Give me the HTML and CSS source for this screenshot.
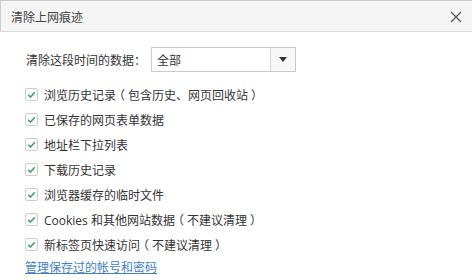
FILE: index.html
```html
<!DOCTYPE html>
<html lang="zh-CN">
<head>
<meta charset="utf-8">
<title>清除上网痕迹</title>
<link rel="stylesheet" href="styles.css">
</head>
<body>
<div class="dialog">
  <div class="header">
    <span class="title">清除上网痕迹</span>
    <span class="close" aria-label="关闭">
      <svg width="12" height="12" viewBox="0 0 12 12"><path d="M1 1 L11 11 M11 1 L1 11" stroke="#555" stroke-width="1.2" fill="none"/></svg>
    </span>
  </div>
  <div class="content">
    <div class="range">
      <span class="range-label">清除这段时间的数据：</span>
      <div class="select">
        <span class="select-value">全部</span>
        <span class="select-btn"><svg width="8" height="5" viewBox="0 0 8 5"><path d="M0 0 H8 L4 5 Z" fill="#333"/></svg></span>
      </div>
    </div>
    <ul class="options">
      <li class="option"><span class="check"><svg width="11" height="11" viewBox="0 0 11 11"><path d="M2.2 5.8 L4.5 8 L8.8 3.2" stroke="#44a866" stroke-width="1.7" fill="none"/></svg></span><span>浏览历史记录<span class="paren">（</span>包含历史、网页回收站<span class="paren">）</span></span></li>
      <li class="option"><span class="check"><svg width="11" height="11" viewBox="0 0 11 11"><path d="M2.2 5.8 L4.5 8 L8.8 3.2" stroke="#44a866" stroke-width="1.7" fill="none"/></svg></span><span>已保存的网页表单数据</span></li>
      <li class="option"><span class="check"><svg width="11" height="11" viewBox="0 0 11 11"><path d="M2.2 5.8 L4.5 8 L8.8 3.2" stroke="#44a866" stroke-width="1.7" fill="none"/></svg></span><span>地址栏下拉列表</span></li>
      <li class="option"><span class="check"><svg width="11" height="11" viewBox="0 0 11 11"><path d="M2.2 5.8 L4.5 8 L8.8 3.2" stroke="#44a866" stroke-width="1.7" fill="none"/></svg></span><span>下载历史记录</span></li>
      <li class="option"><span class="check"><svg width="11" height="11" viewBox="0 0 11 11"><path d="M2.2 5.8 L4.5 8 L8.8 3.2" stroke="#44a866" stroke-width="1.7" fill="none"/></svg></span><span>浏览器缓存的临时文件</span></li>
      <li class="option"><span class="check"><svg width="11" height="11" viewBox="0 0 11 11"><path d="M2.2 5.8 L4.5 8 L8.8 3.2" stroke="#44a866" stroke-width="1.7" fill="none"/></svg></span><span><span class="latin">Cookies </span>和其他网站数据<span class="paren">（</span>不建议清理<span class="paren">）</span></span></li>
      <li class="option"><span class="check"><svg width="11" height="11" viewBox="0 0 11 11"><path d="M2.2 5.8 L4.5 8 L8.8 3.2" stroke="#44a866" stroke-width="1.7" fill="none"/></svg></span><span>新标签页快速访问<span class="paren">（</span>不建议清理<span class="paren">）</span></span></li>
    </ul>
    <a class="manage" href="#">管理保存过的帐号和密码</a>
  </div>
</div>
</body>
</html>
```
FILE: styles.css
```css
html, body {
  margin: 0;
  padding: 0;
  background: #ffffff;
}
body {
  font-family: "Noto Sans CJK SC", "Noto Sans", sans-serif;
  font-size: 12px;
  color: #333333;
  text-spacing-trim: space-all;
}
.latin {
  font-family: "Open Sans", "Noto Sans", sans-serif;
  font-size: 12px;
  white-space: pre;
}
.paren {
  font-feature-settings: "halt" 1;
  padding: 0 3px;
}
.dialog {
  width: 472px;
  height: 280px;
  box-sizing: border-box;
  border-top: 1px solid #c9c9c9;
  background: #ffffff;
}
.header {
  height: 30px;
  display: flex;
  align-items: center;
  justify-content: space-between;
  padding: 0 10px 0 11px;
  background: #f5f5f5;
  border-bottom: 1px solid #dcdcdc;
  border-left: 1px solid #cfcfcf;
  box-sizing: content-box;
}
.title {
  font-size: 12px;
  color: #444444;
  margin-left: -1px;
}
.close {
  display: flex;
  align-items: center;
  margin-top: 1px;
}
.content {
  padding: 15px 0 0 0;
}
.range {
  display: flex;
  align-items: center;
  height: 25px;
  padding-left: 26px;
}
.range-label {
  width: 125px;
}
.select {
  width: 143px;
  height: 23px;
  border: 1px solid #cacaca;
  display: flex;
  align-items: stretch;
  background: #ffffff;
}
.select-value {
  flex: 1;
  padding-left: 5px;
  display: flex;
  align-items: center;
}
.select-btn {
  width: 24px;
  border-left: 1px solid #d6d6d6;
  background: #f7f7f7;
  display: flex;
  align-items: center;
  justify-content: center;
}
.options {
  list-style: none;
  margin: 10px 0 0 0;
  padding: 0 0 0 25px;
}
.option {
  height: 25px;
  display: flex;
  align-items: center;
  gap: 6px;
}
.check {
  width: 11px;
  height: 11px;
  border: 1px solid #cccccc;
  border-radius: 2px;
  background: #ffffff;
  display: flex;
}
.manage {
  display: inline-block;
  margin: 0 0 0 25px;
  line-height: 19px;
  color: #3f7fc4;
  text-decoration: underline;
}
```
